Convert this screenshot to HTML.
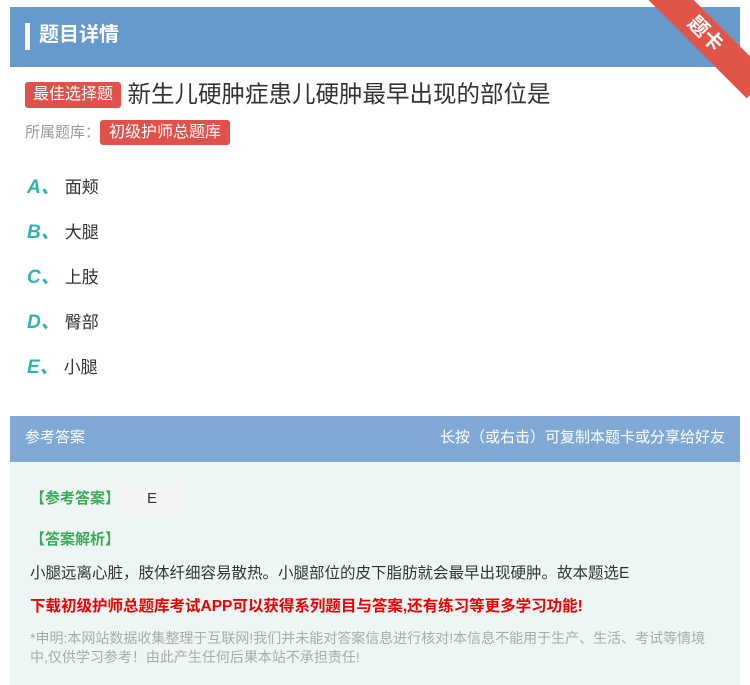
<!DOCTYPE html>
<html><head><meta charset="utf-8"><style>
*{margin:0;padding:0;box-sizing:border-box}
body{width:750px;height:685px;background:#fff;font-family:"Liberation Sans","Noto Sans CJK SC",sans-serif;position:relative;overflow:hidden}
.hd{position:absolute;left:10px;top:7px;width:730px;height:60px;background:#6699cc}
.hd .bar{position:absolute;left:15px;top:16px;width:5px;height:27px;background:#fff}
.hd .t{position:absolute;left:29px;top:14px;color:#fff;font-size:20px;font-weight:bold;line-height:28px}
.rib{position:absolute;right:-30px;top:18px;width:150px;height:32px;background:#e05548;transform:rotate(45deg);color:#fff;font-size:20px;text-align:center;line-height:32px;font-weight:bold}
.tag{display:inline-block;background:#e0514b;color:#fff;border-radius:3px}
.q{position:absolute;left:25px;top:79px;font-size:23.5px;color:#333;line-height:30px}
.q .tag{font-size:16px;padding:0 8px;line-height:26px;vertical-align:3px}
.lib{position:absolute;left:25px;top:120px;font-size:15px;color:#999;line-height:24px}
.lib .tag{font-size:16px;padding:0 9px;line-height:25px}
.op{position:absolute;left:27px;font-size:17px;color:#333;line-height:22px}
.op b{color:#2fb5ad;font-style:italic;font-size:19px;margin-right:5px}
.ah{position:absolute;left:10px;top:416px;width:730px;height:46px;background:#80aad5;color:#fff;font-size:15px;line-height:44px;padding:0 15px}
.ab{position:absolute;left:10px;top:462px;width:730px;height:223px;background:#eef6f5}
.g{color:#3aaa55;font-weight:bold;font-size:15px;position:absolute;left:20px}
</style></head><body>
<div class="hd"><div class="bar"></div><div class="t">题目详情</div></div>
<div class="rib">题卡</div>
<div class="q"><span class="tag">最佳选择题</span> 新生儿硬肿症患儿硬肿最早出现的部位是</div>
<div class="lib">所属题库：<span class="tag">初级护师总题库</span></div>
<div class="op" style="top:177px"><b>A、</b>面颊</div>
<div class="op" style="top:222px"><b>B、</b>大腿</div>
<div class="op" style="top:267px"><b>C、</b>上肢</div>
<div class="op" style="top:312px"><b>D、</b>臀部</div>
<div class="op" style="top:357px"><b>E、</b>小腿</div>
<div class="ah"><span>参考答案</span><span style="float:right">长按（或右击）可复制本题卡或分享给好友</span></div>
<div class="ab">
<div class="g" style="top:22px">【参考答案】<span style="display:inline-block;width:64px;height:30px;background:#f4f4f4;color:#333;font-weight:normal;vertical-align:middle;text-align:center;line-height:30px">E</span></div>
<div class="g" style="top:66px">【答案解析】</div>
<div style="position:absolute;left:20px;top:99px;font-size:15.5px;color:#333">小腿远离心脏，肢体纤细容易散热。小腿部位的皮下脂肪就会最早出现硬肿。故本题选E</div>
<div style="position:absolute;left:20px;top:132px;font-size:15.5px;color:#e00;font-weight:bold">下载初级护师总题库考试APP可以获得系列题目与答案,还有练习等更多学习功能!</div>
<div style="position:absolute;left:20px;top:167px;width:690px;font-size:14px;color:#aaa;line-height:19px">*申明:本网站数据收集整理于互联网!我们并未能对答案信息进行核对!本信息不能用于生产、生活、考试等情境中,仅供学习参考！由此产生任何后果本站不承担责任!</div>
</div>
</body></html>
